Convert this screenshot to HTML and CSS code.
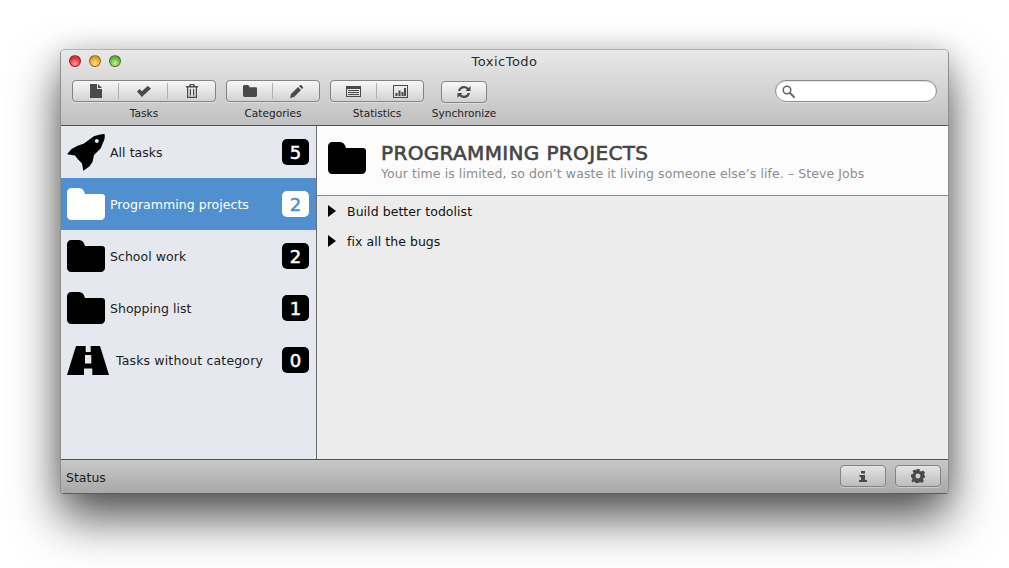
FILE: index.html
```html
<!DOCTYPE html>
<html lang="en">
<head>
<meta charset="utf-8">
<title>ToxicTodo</title>
<link rel="stylesheet" href="styles.css">
</head>
<body>
<svg class="defs" width="0" height="0" aria-hidden="true">
  <symbol id="folder" viewBox="0 0 38 32"><path d="M4 0h8c3 0 5 2 6 6h17c2 0 3 1 3 3v19c0 2-2 4-4 4H4c-2 0-4-2-4-4V4c0-2 2-4 4-4z"/></symbol>
</svg>
<main class="window">
  <header class="chrome">
    <div class="titlebar">
      <div class="lights"><span class="light red"></span><span class="light yellow"></span><span class="light green"></span></div>
      <div class="title">ToxicTodo</div>
    </div>
    <div class="toolbar">
      <div class="group g-tasks">
        <div class="seg">
          <button class="cell"><svg class="ico" viewBox="0 0 12 14"><path d="M0 0h7v5h5v9H0zM8 0l4 4H8z"/></svg></button>
          <button class="cell shift"><svg class="ico" width="14" height="11" viewBox="0 0 14 11"><path d="M0 5.500l2.500-2.500 2.300 2.300L10.800 0 14 2.500 4.800 11z"/></svg></button>
          <button class="cell shift"><svg class="ico" viewBox="0 0 12 14"><path fill-rule="evenodd" d="M4 0h4l1 2h3v1.500h-1V14H1V3.500H0V2h3zM2.200 3.500V12.800h7.600V3.500zM3.800 5h1.200v6.500H3.800zM7 5h1.200v6.500H7zM5 1v1h2V1z"/></svg></button>
        </div>
        <span class="label">Tasks</span>
      </div>
      <div class="group g-cat">
        <div class="seg">
          <button class="cell"><svg class="ico" width="14" height="12" viewBox="0 0 38 32"><use href="#folder"/></svg></button>
          <button class="cell"><svg class="ico" width="13" height="13" viewBox="0 0 13 13"><path d="M0 13l1-4 7-7 3 3-7 7zM9 1l1-1q.500-.300 1 0l2 2q.300.500 0 1l-1 1z"/></svg></button>
        </div>
        <span class="label">Categories</span>
      </div>
      <div class="group g-stats">
        <div class="seg">
          <button class="cell"><svg class="ico" width="15" height="11" viewBox="0 0 15 11"><path fill-rule="evenodd" d="M0 0h15v11H0zM1 3v7h13V3zM2 4h11v1H2zM2 6h11v1H2zM2 8h11v1H2z"/></svg></button>
          <button class="cell"><svg class="ico" width="15" height="13" viewBox="0 0 15 13"><path fill-rule="evenodd" d="M0 0h15v13H0zM1 1v11h13V1zM2.500 8h2v3h-2zM5.500 5.500h2V11h-2zM8.500 7h2v4h-2zM11 3h2v8h-2z"/></svg></button>
        </div>
        <span class="label">Statistics</span>
      </div>
      <div class="group g-sync">
        <button class="seg single"><svg class="ico" width="14" height="12" viewBox="0 0 14 12"><path d="M1 5C1.500 2 4 0 7 0c2 0 3.500 1 4.500 2L13.500 0v5H8.500l1.500-1.500C9.300 2.800 8.200 2.300 7 2.300c-1.800 0-3.200 1.100-3.700 2.700zM13 7c-.5 3-3 5-6 5-2 0-3.500-1-4.500-2L.5 12V7h5L4 8.500c.7.700 1.800 1.200 3 1.200 1.800 0 3.200-1.100 3.700-2.700z"/></svg></button>
        <span class="label">Synchronize</span>
      </div>
      <div class="search">
        <svg class="glass" width="13" height="13" viewBox="0 0 13 13"><circle cx="5" cy="5" r="3.800" fill="none" stroke="#666" stroke-width="1.500"/><path d="M8 8l4 4" stroke="#666" stroke-width="2" stroke-linecap="round"/></svg>
      </div>
    </div>
  </header>

  <div class="body">
    <nav class="sidebar">
      <div class="row">
        <svg class="row-ico rocket" width="38" height="37" viewBox="0 0 38 37"><path fill-rule="evenodd" d="M37.500 0C38 2.500 37.800 4.500 36.800 7 35.700 9.500 34.500 12 34 14L27 21 25.500 28 22.300 32.500 16.300 36.700 15 29.500 10.700 25 8 21.500 0 20.300 4.500 15 10 12 17 9.500 26.800 2.300C30.500 1 34 .3 37.500 0zM27.800 7a2 2 0 1 0 4 0 2 2 0 0 0-4 0z"/></svg>
        <span class="name">All tasks</span><span class="badge">5</span>
      </div>
      <div class="row selected">
        <svg class="row-ico" width="38" height="32"><use href="#folder"/></svg>
        <span class="name">Programming projects</span><span class="badge">2</span>
      </div>
      <div class="row">
        <svg class="row-ico" width="38" height="32"><use href="#folder"/></svg>
        <span class="name">School work</span><span class="badge">2</span>
      </div>
      <div class="row">
        <svg class="row-ico" width="38" height="32"><use href="#folder"/></svg>
        <span class="name">Shopping list</span><span class="badge">1</span>
      </div>
      <div class="row">
        <svg class="row-ico road" width="42" height="29" viewBox="0 0 42 29"><path fill-rule="evenodd" d="M9 0H18.700V6H23.700V0H33L42 29H25.300V22.500H17V29H0zM18 9V17.500H24.300V9z"/></svg>
        <span class="name">Tasks without category</span><span class="badge">0</span>
      </div>
    </nav>
    <section class="detail">
      <div class="head">
        <svg class="head-ico" width="38" height="32"><use href="#folder"/></svg>
        <div class="head-text">
          <h1 class="heading">PROGRAMMING PROJECTS</h1>
          <p class="quote">Your time is limited, so don’t waste it living someone else’s life. – Steve Jobs</p>
        </div>
      </div>
      <ul class="tasks">
        <li class="task"><span class="tri"></span>Build better todolist</li>
        <li class="task"><span class="tri"></span>fix all the bugs</li>
      </ul>
    </section>
  </div>

  <footer class="status">
    <span class="status-text">Status</span>
    <button class="seg small"><svg class="ico" width="8" height="11" viewBox="0 0 8 11"><path d="M2 0h4v2.500H2zM.5 4H6v5h2v2H0V9h2V6H.5z"/></svg></button>
    <button class="seg small"><svg class="ico" width="14" height="14" viewBox="0 0 14 14"><path fill-rule="evenodd" d="M5.500 0h3l.4 1.900 1.300.6L12 1.500 14 3.500l-1 1.700.6 1.300L14 7v1.500l-1.400.4-.6 1.300.9 1.800-1.900 1.900-1.800-1-1.200.6-.4 1.500h-3l-.4-1.900-1.300-.5-1.800 1L.5 11.700l1-1.800-.6-1.300L0 8.300V5.500l1.900-.4.6-1.300-1-1.800L3.500.5l1.700 1 .0-.1zM7 4.500a2.500 2.500 0 1 0 0 5 2.500 2.500 0 0 0 0-5z"/></svg></button>
  </footer>
</main>
</body>
</html>
```
FILE: styles.css
```css
* { box-sizing: border-box; }
html, body { margin: 0; height: 100%; background: #fff; overflow: hidden; }
body { padding: 49px 60px 0; font-family: "DejaVu Sans", sans-serif; }
.defs { position: absolute; }
.window {
  width: 889px; height: 445px;
  display: flex; flex-direction: column;
  border: 1px solid #8f8f8f; border-top-color: #b4b4b4; border-bottom-color: #5c5c5c;
  border-radius: 5px 5px 4px 4px;
  background: #ececec;
  box-shadow: 0 24px 48px rgba(0,0,0,.68), 0 0 24px rgba(0,0,0,.12);
}
.chrome {
  height: 76px; flex: none;
  background: linear-gradient(#e9e9e9, #c0c0c0);
  border-radius: 4px 4px 0 0;
  border-bottom: 1px solid #525252;
}
.titlebar { height: 22px; display: flex; align-items: center; position: relative; padding-left: 8px; }
.lights { display: flex; gap: 8px; }
.light { width: 12px; height: 12px; border-radius: 50%; border: 1px solid rgba(0,0,0,.35); }
.red { background: radial-gradient(circle at 50% 75%, #ffa4a0, #e8383c 55%, #b8262c); }
.yellow { background: radial-gradient(circle at 50% 75%, #ffe08c, #eda62c 55%, #b98220); }
.green { background: radial-gradient(circle at 50% 75%, #c8f09c, #6cbb3f 55%, #4f9232); }
.title { position: absolute; left: 0; right: 0; top: 3px; text-align: center; font-size: 13px; letter-spacing: .5px; line-height: 18px; color: #2c2c2c; }
.toolbar { display: flex; align-items: flex-start; padding: 8px 11px 0; position: relative; }
.group { display: flex; flex-direction: column; align-items: center; }
.g-tasks { width: 144px; margin-right: 10px; }
.g-cat { width: 94px; margin-right: 10px; }
.g-stats { width: 94px; margin-right: 5px; }
.g-sync { width: 70px; padding-top: 1px; }
.seg {
  display: flex; height: 22px; width: 100%;
  border: 1px solid #848484; border-radius: 4px;
  background: linear-gradient(#f8f8f8, #d2d2d2);
  box-shadow: 0 1px 0 rgba(255,255,255,.35);
  padding: 0; color: #4a4a4a; align-items: center; justify-content: center;
}
.cell {
  flex: 1; height: 16px; background: none; border: 0; padding: 0;
  display: flex; align-items: center; justify-content: center;
  border-left: 1px solid #b0b0b0;
}
.cell:first-child { border-left: 0; flex: none; width: 45px; }
.shift { padding-left: 2px; }
.single { width: 46px; }
.ico { fill: #4a4a4a; display: block; }
.ico:not([width]) { width: 12px; height: 14px; }
.label { font-size: 10.600px; line-height: 13px; color: #222; margin-top: 5px; white-space: nowrap; }
.g-sync .label { margin-top: 4px; }
.search {
  position: absolute; right: 11px; top: 8px;
  width: 162px; height: 22px; border-radius: 11px;
  border: 1px solid #8c8c8c; background: #fff;
  box-shadow: inset 0 1px 1px rgba(0,0,0,.12), 0 1px 0 rgba(255,255,255,.4);
  display: flex; align-items: center; padding-left: 6px;
}
.body { flex: 1; display: flex; min-height: 0; }
.sidebar { width: 256px; flex: none; background: #e5e8ee; border-right: 1px solid #6e6e6e; }
.row { height: 52px; display: flex; align-items: center; padding: 0 7px 0 6px; color: #111; }
.row-ico { flex: none; fill: #000; }
.name { font-size: 12.500px; letter-spacing: .04px; margin-left: 5px; flex: 1; color: #1c1c1c; white-space: nowrap; }
.road + .name { margin-left: 7px; letter-spacing: .15px; }
.badge {
  width: 27px; height: 26px; border-radius: 5px; background: #000; color: #fff;
  font-size: 18px; -webkit-text-stroke: .5px currentColor; display: flex; align-items: center; justify-content: center;
}
.selected { background: #5090d0; }
.selected .row-ico { fill: #fff; }
.selected .name { color: #fff; }
.selected .badge { background: #fff; color: #5090d0; }
.detail { flex: 1; display: flex; flex-direction: column; min-width: 0; }
.head { height: 70px; background: #fcfcfc; border-bottom: 1px solid #8e8e8e; display: flex; align-items: center; padding: 2px 0 0 11px; flex: none; }
.head-ico { fill: #000; flex: none; align-self: flex-start; margin-top: 14px; }
.head-text { margin-left: 15px; }
.heading { margin: 0; font-size: 20px; letter-spacing: .35px; line-height: 22px; font-weight: 400; -webkit-text-stroke: .6px currentColor; color: #444; white-space: nowrap; }
.quote { margin: 2px 0 0; font-size: 12.500px; letter-spacing: .08px; line-height: 15px; color: #8c8c8c; white-space: nowrap; }
.tasks { list-style: none; margin: 0; padding: 0 0 0 11px; }
.task { height: 30px; display: flex; align-items: center; font-size: 12.500px; letter-spacing: .05px; color: #111; }
.tri { width: 0; height: 0; border-left: 8px solid #000; border-top: 6px solid transparent; border-bottom: 6px solid transparent; margin-right: 11px; }
.status {
  height: 34px; flex: none; display: flex; align-items: center; gap: 9px;
  background: linear-gradient(#c8c8c8, #a8a8a8);
  border-top: 1px solid #4e4e4e;
  border-radius: 0 0 3px 3px;
  padding: 0 7px 1px 5px;
}
.status-text { font-size: 12.500px; color: #1c1c1c; flex: 1; padding-top: 2px; }
.small { width: 46px; flex: none; background: linear-gradient(#e4e4e4, #bcbcbc); }
```
